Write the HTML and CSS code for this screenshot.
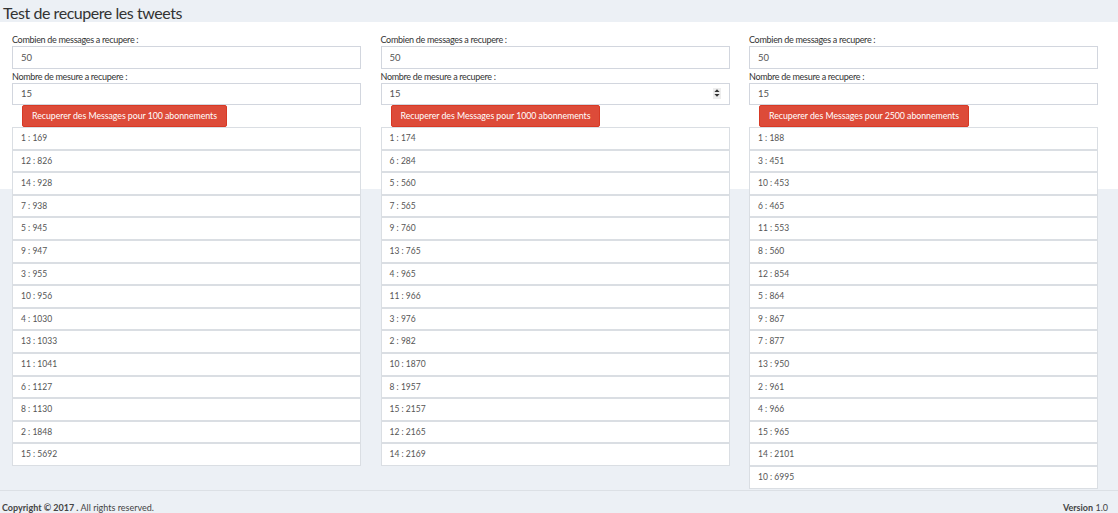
FILE: index.html
```html
<!DOCTYPE html>
<html lang="fr">
<head>
<meta charset="utf-8">
<title>Test de recupere les tweets</title>
<link rel="stylesheet" href="styles.css">
</head>
<body>
<header class="page-header">
  <h1 class="page-title">Test de recupere les tweets</h1>
</header>
<main class="content">
  <section class="col">
    <label class="field-label">Combien de messages a recupere :</label>
    <div class="field"><input class="field-input" type="text" value="50"></div>
    <label class="field-label">Nombre de mesure a recupere :</label>
    <div class="field"><input class="field-input" type="text" value="15"></div>
    <button class="btn-danger">Recuperer des Messages pour 100 abonnements</button>
    <ul class="list">
      <li class="item">1 : 169</li>
      <li class="item">12 : 826</li>
      <li class="item">14 : 928</li>
      <li class="item">7 : 938</li>
      <li class="item">5 : 945</li>
      <li class="item">9 : 947</li>
      <li class="item">3 : 955</li>
      <li class="item">10 : 956</li>
      <li class="item">4 : 1030</li>
      <li class="item">13 : 1033</li>
      <li class="item">11 : 1041</li>
      <li class="item">6 : 1127</li>
      <li class="item">8 : 1130</li>
      <li class="item">2 : 1848</li>
      <li class="item">15 : 5692</li>
    </ul>
  </section>
  <section class="col">
    <label class="field-label">Combien de messages a recupere :</label>
    <div class="field"><input class="field-input" type="text" value="50"></div>
    <label class="field-label">Nombre de mesure a recupere :</label>
    <div class="field">
      <input class="field-input" type="text" value="15">
      <span class="spinner">
        <svg width="8" height="10" viewBox="0 0 8 10"><path d="M4 1.2 L6.6 4 H1.4 Z M4 8.8 L6.6 6 H1.4 Z" fill="#333"/></svg>
      </span>
    </div>
    <button class="btn-danger">Recuperer des Messages pour 1000 abonnements</button>
    <ul class="list">
      <li class="item">1 : 174</li>
      <li class="item">6 : 284</li>
      <li class="item">5 : 560</li>
      <li class="item">7 : 565</li>
      <li class="item">9 : 760</li>
      <li class="item">13 : 765</li>
      <li class="item">4 : 965</li>
      <li class="item">11 : 966</li>
      <li class="item">3 : 976</li>
      <li class="item">2 : 982</li>
      <li class="item">10 : 1870</li>
      <li class="item">8 : 1957</li>
      <li class="item">15 : 2157</li>
      <li class="item">12 : 2165</li>
      <li class="item">14 : 2169</li>
    </ul>
  </section>
  <section class="col">
    <label class="field-label">Combien de messages a recupere :</label>
    <div class="field"><input class="field-input" type="text" value="50"></div>
    <label class="field-label">Nombre de mesure a recupere :</label>
    <div class="field"><input class="field-input" type="text" value="15"></div>
    <button class="btn-danger">Recuperer des Messages pour 2500 abonnements</button>
    <ul class="list">
      <li class="item">1 : 188</li>
      <li class="item">3 : 451</li>
      <li class="item">10 : 453</li>
      <li class="item">6 : 465</li>
      <li class="item">11 : 553</li>
      <li class="item">8 : 560</li>
      <li class="item">12 : 854</li>
      <li class="item">5 : 864</li>
      <li class="item">9 : 867</li>
      <li class="item">7 : 877</li>
      <li class="item">13 : 950</li>
      <li class="item">2 : 961</li>
      <li class="item">4 : 966</li>
      <li class="item">15 : 965</li>
      <li class="item">14 : 2101</li>
      <li class="item">10 : 6995</li>
    </ul>
  </section>
</main>
<footer class="footer">
  <div class="copyright"><strong>Copyright &copy; 2017 .</strong> All rights reserved.</div>
  <div class="version"><strong>Version</strong> 1.0</div>
</footer>
</body>
</html>
```
FILE: styles.css
```css
* { box-sizing: border-box; }

html, body {
  margin: 0;
  padding: 0;
}

body {
  background: #ecf0f5;
  font-family: Lato, "Open Sans", "Liberation Sans", sans-serif;
  color: #333;
  width: 1118px;
  height: 513px;
  overflow: hidden;
}

.page-header {
  height: 22px;
  padding-left: 3px;
}

.page-title {
  margin: 0;
  font-weight: 400;
  font-size: 16px;
  letter-spacing: -0.45px;
  line-height: 26px;
  color: #333;
}

.content {
  display: grid;
  grid-template-columns: 349px 349px 349px;
  column-gap: 19.5px;
  padding: 10px 20px 1px 12px;
  background: linear-gradient(#ffffff 0, #ffffff 167px, #ecf0f5 167px);
  align-items: start;
}

.col {
  display: flex;
  flex-direction: column;
}

.field-label {
  display: block;
  height: 14px;
  font-size: 9px;
  letter-spacing: -0.3px;
  line-height: 15px;
  color: #333;
  white-space: nowrap;
}

.field {
  position: relative;
  height: 22.5px;
}

.field-input {
  display: block;
  width: 100%;
  height: 100%;
  margin: 0;
  padding: 0 8px;
  border: 1px solid #d2d6de;
  border-radius: 0;
  background: #fff;
  font-family: inherit;
  font-size: 9.5px;
  color: #555;
  outline: none;
}

.spinner {
  position: absolute;
  right: 9px;
  top: 5px;
  width: 8px;
  height: 11px;
  background: #ededed;
  display: flex;
  align-items: center;
  justify-content: center;
}

.spinner svg { display: block; }

.btn-danger {
  align-self: flex-start;
  margin: 0 0 0 10px;
  height: 22px;
  padding: 0 9px;
  border: 1px solid #d73925;
  border-radius: 2px;
  background: #dd4b39;
  color: #fff;
  font-family: inherit;
  font-size: 8.8px;
  letter-spacing: -0.05px;
  line-height: 20px;
  white-space: nowrap;
}

.list {
  list-style: none;
  margin: 0;
  padding: 0;
}

.item {
  height: 22.6px;
  padding: 0 8px;
  border: 1px solid #dadee3;
  background: #fff;
  font-size: 8.5px;
  line-height: 20.6px;
  color: #555;
}

.footer {
  display: flex;
  justify-content: space-between;
  align-items: flex-start;
  height: 23px;
  padding: 11px 10px 0 2px;
  border-top: 1px solid #dce0e5;
  font-size: 9px;
  line-height: 12px;
  color: #444;
}

.footer strong { font-weight: 700; }
```
